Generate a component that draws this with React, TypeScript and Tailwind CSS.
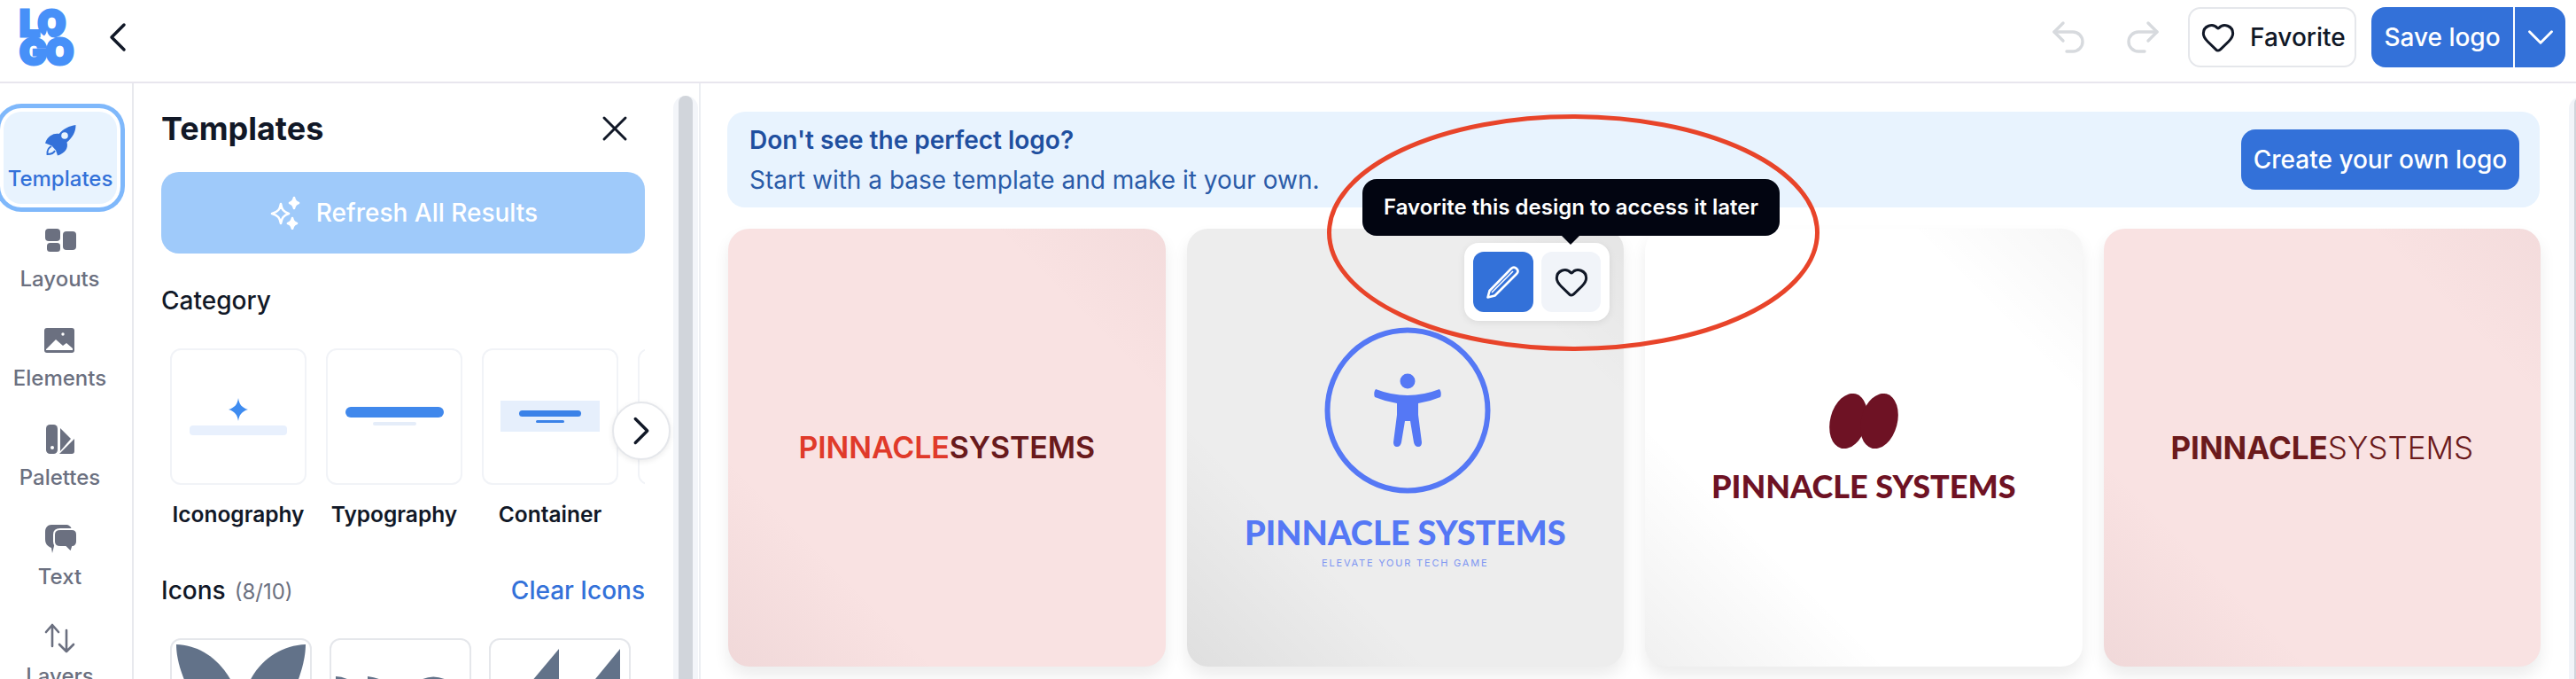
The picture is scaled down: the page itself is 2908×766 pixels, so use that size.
import { ChevronDown, ChevronLeft, ChevronRight, Heart, Redo2, Undo2, X } from 'lucide-react'
import type { ReactNode } from 'react'

const GRAY = '#6b7080'

function RocketIcon() {
    return (
        <svg width="36" height="36" viewBox="0 0 36 36">
            <path d="M35.5 1C28 2 22 5 16.5 11C11 10 4 13 1 21.5L8.5 24.5L13 29.5L15 35.5C23 33 27.5 27.5 25.5 20.5C32 15 35.5 9 35.5 1Z" fill="#3371d9" />
            <circle cx="23" cy="13" r="3.8" fill="#e8f3fe" />
            <path d="M8 25C4.5 27 3 30 3.5 34C7 34 10.5 33 12 30" fill="none" stroke="#3371d9" strokeWidth="1.9" />
        </svg>
    )
}

function LayoutsIcon() {
    return (
        <svg width="36" height="36" viewBox="0 0 36 36" fill={GRAY}>
            <rect x="1" y="4" width="17" height="14" rx="4" />
            <rect x="21" y="7" width="15" height="21" rx="4" />
            <rect x="3" y="20" width="15" height="10" rx="3.5" />
        </svg>
    )
}

function ElementsIcon() {
    return (
        <svg width="36" height="36" viewBox="0 0 36 36">
            <rect x="1" y="4" width="34" height="28" rx="3" fill={GRAY} />
            <circle cx="22" cy="11" r="1.7" fill="#fff" />
            <path d="M3 28L14 17L22 24L26 21L33 27V29H3Z" fill="#fff" />
        </svg>
    )
}

function PalettesIcon() {
    return (
        <svg width="36" height="36" viewBox="0 0 36 36" fill={GRAY}>
            <rect x="2" y="1" width="13" height="33" rx="4.5" />
            <circle cx="9" cy="27" r="2" fill="#fff" />
            <path d="M18 5L30 17L18 31Z" />
            <path d="M17 34L34 17V31Q34 34 31 34Z" />
        </svg>
    )
}

function TextIcon() {
    return (
        <svg width="36" height="36" viewBox="0 0 36 36">
            <path d="M8 2H24C28 2 30 4 31 7V22H12L9 34L8 28C3 26 1 23 1 18V10C1 5 4 2 8 2Z" fill={GRAY} />
            <path d="M18 7H31C34 7 37 9 37 13V21C37 25 34 27 32 27L30 33L24 27H18C14 27 11 25 11 21V13C11 9 14 7 18 7Z" fill={GRAY} stroke="#fff" strokeWidth="2" />
        </svg>
    )
}

function LayersIcon() {
    return (
        <svg width="36" height="36" viewBox="0 0 36 36" fill="none" stroke={GRAY} strokeWidth="2.6" strokeLinecap="round" strokeLinejoin="round">
            <path d="M10 27V3M3 11L10 3L17 11" />
            <path d="M26 9V33M18 25L26 33L34 25" />
        </svg>
    )
}

function SparklesIcon() {
    return (
        <svg width="38" height="38" viewBox="0 0 38 38" fill="none" stroke="#fff" strokeWidth="2.6" strokeLinejoin="round">
            <path d="M14 9C15 15 17 18 23 20C17 22 15 25 14 31C13 25 11 22 4 20C11 18 13 15 14 9Z" />
            <path d="M29 2C29.5 5 31 7 34 8C31 9 29.5 11 29 14C28.5 11 27 9 24 8C27 7 28.5 5 29 2Z" fill="#fff" />
            <path d="M27 25C27.5 28 29 30 32 31C29 32 27.5 34 27 37C26.5 34 25 32 22 31C25 30 26.5 28 27 25Z" fill="#fff" />
        </svg>
    )
}

function PencilIcon() {
    return (
        <svg width="40" height="40" viewBox="0 0 40 40" fill="none" stroke="#fff" strokeWidth="2.6" strokeLinejoin="round">
            <path d="M2.5 37.5L4.5 30L29 5Q32 2 35 5Q38 8 35 11L10.5 35.5Z" />
            <path d="M7 32L31 8" strokeWidth="1.6" />
        </svg>
    )
}

function NavItem({ icon, label }: { icon: ReactNode; label: string }) {
    return (
        <div className="flex h-[76px] flex-col items-center">
            {icon}
            <span className="mt-[10px] text-[24px] leading-[30px] font-medium text-[#6b7080]">{label}</span>
        </div>
    )
}

function CategoryCard({ label, children }: { label: string; children: ReactNode }) {
    return (
        <div className="flex w-[154px] shrink-0 flex-col items-center">
            <div className="flex h-[154px] w-[154px] flex-col items-center rounded-[12px] border-2 border-[#f1f3f7] bg-white">
                {children}
            </div>
            <span className="mt-[18px] whitespace-nowrap text-[24.5px] leading-[30px] font-semibold text-[#111827]">{label}</span>
        </div>
    )
}

function IconCard({ children }: { children: ReactNode }) {
    return (
        <div className="h-[160px] w-[160px] shrink-0 rounded-[12px] border-2 border-[#e5e7eb] bg-white">
            <svg width="156" height="156" viewBox="0 0 156 156" fill="#627289">
                {children}
            </svg>
        </div>
    )
}

function Scrollbar({ className }: { className: string }) {
    return (
        <div className={className}>
            <div className="mt-[6px] ml-[6px] h-full w-[16px] rounded-t-full bg-[#d1d5db]" />
        </div>
    )
}

function TemplateCard({ className, children }: { className: string; children: ReactNode }) {
    return (
        <div className={`relative flex h-[494px] flex-col items-center justify-center rounded-[24px] shadow-[0_10px_18px_rgba(0,0,0,0.08)] ${className}`}>
            {children}
        </div>
    )
}

export default function App() {
    return (
        <div className="relative flex h-[766px] w-[2908px] flex-col overflow-hidden bg-white font-['Inter',sans-serif] text-[#111827]">
            {/* top bar */}
            <header className="flex h-[94px] shrink-0 items-center border-b-2 border-[#e8e6ee] pr-[12px] pb-[8px] pl-[22px]">
                <div className="relative flex h-[64px] w-[60px] flex-col text-[41px] leading-[32px] font-black tracking-[-1.5px] text-[#4790f8]">
                    <span className="[-webkit-text-stroke:3px_#4790f8]">LO</span>
                    <span className="[-webkit-text-stroke:3px_#4790f8]">GO</span>
                    <svg className="absolute top-[24px] left-[22px]" width="18" height="18" viewBox="0 0 18 18" fill="#fff">
                        <path d="M9 0C10 5 12 8 18 9C12 10 10 13 9 18C8 13 6 10 0 9C6 8 8 5 9 0Z" />
                    </svg>
                </div>
                <ChevronLeft className="ml-[23px]" size={56} strokeWidth={1.5} />
                <div className="ml-auto flex items-center">
                    <Undo2 size={48} strokeWidth={1.7} color="#d7dade" />
                    <Redo2 className="ml-[36px]" size={48} strokeWidth={1.7} color="#d7dade" />
                    <div className="ml-[27px] flex h-[68px] w-[190px] items-center rounded-[14px] border-2 border-[#e5e7eb] pl-[12px]">
                        <Heart size={40} strokeWidth={1.8} />
                        <span className="ml-[16px] text-[28px] font-medium">Favorite</span>
                    </div>
                    <div className="ml-[17px] flex h-[68px] w-[219px] items-center rounded-[16px] bg-[#3371d9] text-white">
                        <span className="w-[160px] text-center text-[28px] font-medium">Save logo</span>
                        <div className="h-full w-[2px] bg-white" />
                        <ChevronDown className="ml-[4px]" size={50} strokeWidth={1.4} />
                    </div>
                </div>
            </header>

            <div className="flex min-h-0 flex-1">
                {/* icon rail */}
                <nav className="w-[151px] shrink-0 overflow-hidden border-r-2 border-[#e8e9ee] pt-[32px]">
                    <div className="mb-[23.5px] ml-[4px] flex h-[104px] w-[128px] flex-col items-center rounded-[20px] bg-[#e8f3fe] pt-[14px] shadow-[0_0_0_4px_#fff,0_0_0_9px_#7fb8fb]">
                        <RocketIcon />
                        <span className="mt-[11px] text-[24px] leading-[30px] font-medium text-[#3371d9]">Templates</span>
                    </div>
                    <div className="flex flex-col items-center gap-[36px] pr-[14px]">
                        <NavItem icon={<LayoutsIcon />} label="Layouts" />
                        <NavItem icon={<ElementsIcon />} label="Elements" />
                        <NavItem icon={<PalettesIcon />} label="Palettes" />
                        <NavItem icon={<TextIcon />} label="Text" />
                        <NavItem icon={<LayersIcon />} label="Layers" />
                    </div>
                </nav>

                {/* templates panel */}
                <aside className="flex w-[640px] shrink-0 border-r-2 border-[#eceef2]">
                    <div className="relative w-[578px] shrink-0 pt-[27px] pl-[31px]">
                        <div className="w-[546px]">
                            <div className="flex h-[48px] items-center justify-between">
                                <h2 className="text-[36px] font-bold">Templates</h2>
                                <X className="mr-[10px]" size={48} strokeWidth={1.5} />
                            </div>
                            <div className="mt-[25px] flex h-[92px] items-center justify-center gap-[16px] rounded-[20px] bg-[#9fcafa] text-white">
                                <SparklesIcon />
                                <span className="text-[28px] font-medium">Refresh All Results</span>
                            </div>
                            <h3 className="mt-[36px] text-[28px] leading-[34px] font-medium">Category</h3>
                            <div className="mt-[37px] flex gap-[22px] overflow-hidden pl-[10px]">
                                <CategoryCard label="Iconography">
                                    <svg className="mt-[54px]" width="26" height="26" viewBox="0 0 26 26" fill="#3f8cf0">
                                        <path d="M13 0C14 7 17 11 24 13C17 15 14 19 13 26C12 19 9 15 2 13C9 11 12 7 13 0Z" />
                                    </svg>
                                    <div className="mt-[5px] h-[11px] w-[110px] rounded-[4px] bg-[#e8f0fd]" />
                                </CategoryCard>
                                <CategoryCard label="Typography">
                                    <div className="mt-[64px] h-[12px] w-[111px] rounded-full bg-[#4088ec]" />
                                    <div className="mt-[5px] h-[4px] w-[49px] rounded-full bg-[#e5edf9]" />
                                </CategoryCard>
                                <CategoryCard label="Container">
                                    <div className="mt-[57px] flex h-[35px] w-[112px] flex-col items-center bg-[#e6effc] pt-[11px]">
                                        <div className="h-[7px] w-[70px] rounded-full bg-[#3b82e8]" />
                                        <div className="mt-[4px] h-[3px] w-[32px] rounded-full bg-[#3b82e8]" />
                                    </div>
                                </CategoryCard>
                                <div className="h-[154px] w-[154px] shrink-0 rounded-[12px] border-2 border-[#f1f3f7]" />
                            </div>
                            <div className="mt-[54px] flex h-[34px] items-center justify-between">
                                <div className="flex items-baseline gap-[10px]">
                                    <span className="text-[28px] font-medium">Icons</span>
                                    <span className="text-[24px] text-[#6b7080]">(8/10)</span>
                                </div>
                                <span className="text-[28px] font-medium text-[#3371d9]">Clear Icons</span>
                            </div>
                            <div className="mt-[37px] flex gap-[20px] pl-[10px]">
                                <IconCard>
                                    <path d="M5 5C35 6 62 26 76 66L24 66C10 40 5 20 5 5Z" />
                                    <path d="M151 5C121 6 94 26 84 56L84 66L134 66C146 40 151 20 151 5Z" />
                                </IconCard>
                                <IconCard>
                                    <path d="M5 41Q12 41 20 45L5 50Z" />
                                    <path d="M41 41Q50 42 56 45L41 50Z" />
                                    <path d="M101 45Q115 38 130 45L130 50L101 50Z" />
                                </IconCard>
                                <IconCard>
                                    <path d="M77 10V66H30Z" />
                                    <path d="M146 10V66H100Z" />
                                </IconCard>
                            </div>
                        </div>
                        <div className="absolute top-[359px] left-[540px] flex h-[66px] w-[66px] items-center justify-center rounded-full border-2 border-[#e5e7eb] bg-white shadow-[0_2px_6px_rgba(0,0,0,0.08)]">
                            <ChevronRight size={54} strokeWidth={1.5} />
                        </div>
                    </div>
                    <div className="pt-[8px] pl-[31px]">
                        <Scrollbar className="h-full w-[28px] rounded-t-full bg-[#f3f5f9]" />
                    </div>
                </aside>

                {/* results */}
                <main className="flex min-w-0 flex-1">
                    <div className="w-[2109px] shrink-0 pt-[32px] pr-[33px] pl-[30px]">
                        <div className="flex h-[108px] items-center justify-between rounded-[20px] bg-[#e8f3fe] pr-[23px] pl-[25px]">
                            <div className="text-[#2a5ba8]">
                                <p className="text-[28px] leading-[34px] font-semibold text-[#1f4f9f]">Don't see the perfect logo?</p>
                                <p className="mt-[11px] text-[28px] leading-[34px]">Start with a base template and make it your own.</p>
                            </div>
                            <div className="flex h-[68px] w-[314px] items-center justify-center rounded-[16px] bg-[#3371d9] text-[28px] font-medium text-white">
                                Create your own logo
                            </div>
                        </div>
                        <div className="mt-[24px] mr-[-1px] ml-[1px] grid grid-cols-4 gap-[24px]">
                            <TemplateCard className="bg-[#f9e2e2] bg-[linear-gradient(45deg,rgba(100,60,70,0.06),transparent_24%,transparent_80%,rgba(100,60,70,0.04))]">
                                <p className="text-[34px] leading-none font-semibold tracking-[-0.1px] whitespace-nowrap text-[#691a1c]">
                                    <span className="text-[#e03a2a]">PINNACLE</span>SYSTEMS
                                </p>
                            </TemplateCard>
                            <TemplateCard className="bg-[#ededed] bg-[linear-gradient(45deg,rgba(0,0,0,0.06),transparent_28%,transparent_80%,rgba(0,0,0,0.035))]">
                                <svg className="ml-[6px]" width="190" height="190" viewBox="0 0 190 190" fill="#5578f5">
                                    <circle cx="95" cy="95" r="90.5" fill="none" stroke="#5578f5" strokeWidth="6" />
                                    <circle cx="95" cy="62" r="8.5" />
                                    <path d="M59 71Q77 78 95 78Q113 78 131 71Q134 75 132 80Q120 85 107 87L107 100L111 131Q111 136 107 136Q103 136 102 131L98 107L92 107L88 131Q87 136 83 136Q79 136 79 131L83 100L83 87Q70 85 58 80Q56 75 59 71Z" />
                                </svg>
                                <p className="mt-[24px] font-['Lato',sans-serif] text-[38px] leading-[36px] font-black whitespace-nowrap text-[#5578f5]">PINNACLE SYSTEMS</p>
                                <p className="mt-[10px] text-[11px] leading-[14px] tracking-[1.8px] text-[#7e96f2]">ELEVATE YOUR TECH GAME</p>
                            </TemplateCard>
                            <TemplateCard className="bg-white bg-[linear-gradient(45deg,rgba(0,0,0,0.06),transparent_28%,transparent_80%,rgba(0,0,0,0.035))]">
                                <svg width="86" height="62" viewBox="0 0 84 60" fill="#6e1224">
                                    <ellipse cx="25" cy="30" rx="20" ry="31" transform="rotate(15 25 30)" />
                                    <ellipse cx="59" cy="30" rx="20" ry="31" transform="rotate(15 59 30)" />
                                </svg>
                                <p className="mt-[25px] font-['Lato',sans-serif] text-[36px] leading-[35px] font-black whitespace-nowrap text-[#6e1224]">PINNACLE SYSTEMS</p>
                            </TemplateCard>
                            <TemplateCard className="bg-[#f9e2e2] bg-[linear-gradient(45deg,rgba(100,60,70,0.06),transparent_24%,transparent_80%,rgba(100,60,70,0.04))]">
                                <p className="text-[35px] leading-none font-light whitespace-nowrap text-[#6b1a1c]">
                                    <span className="font-bold">PINNACLE</span>SYSTEMS
                                </p>
                            </TemplateCard>
                        </div>
                    </div>
                    <div className="pt-[9px]">
                        <Scrollbar className="h-full w-[28px] rounded-tl-[14px] bg-[#f1f4f9]" />
                    </div>
                </main>
            </div>

            {/* hover actions on the second card, with the annotation on top */}
            <div className="absolute top-[274px] left-[1653px] z-10 flex h-[88px] w-[164px] items-center justify-center gap-[9px] rounded-[16px] bg-white shadow-[0_2px_8px_rgba(0,0,0,0.08)]">
                <div className="flex h-[68px] w-[68px] items-center justify-center rounded-[12px] bg-[#3371d9]">
                    <PencilIcon />
                </div>
                <div className="flex h-[68px] w-[67px] items-center justify-center rounded-[12px] bg-[#f1f4f9]">
                    <Heart size={40} strokeWidth={1.8} />
                </div>
            </div>
            <div className="absolute top-[202px] left-[1538px] z-10 flex h-[64px] w-[471px] items-center justify-center rounded-[16px] bg-[#020511] text-[24px] font-semibold text-white">
                Favorite this design to access it later
            </div>
            <div className="absolute top-[266px] left-[1763px] z-10 h-0 w-0 border-x-[10px] border-t-[10px] border-x-transparent border-t-[#020511]" />
            <svg className="pointer-events-none absolute top-[128px] left-[1497px] z-20" width="558" height="270" viewBox="0 0 558 270" fill="none">
                <ellipse cx="279" cy="134.5" rx="275.5" ry="131" stroke="#e8442a" strokeWidth="5" />
            </svg>
        </div>
    )
}
